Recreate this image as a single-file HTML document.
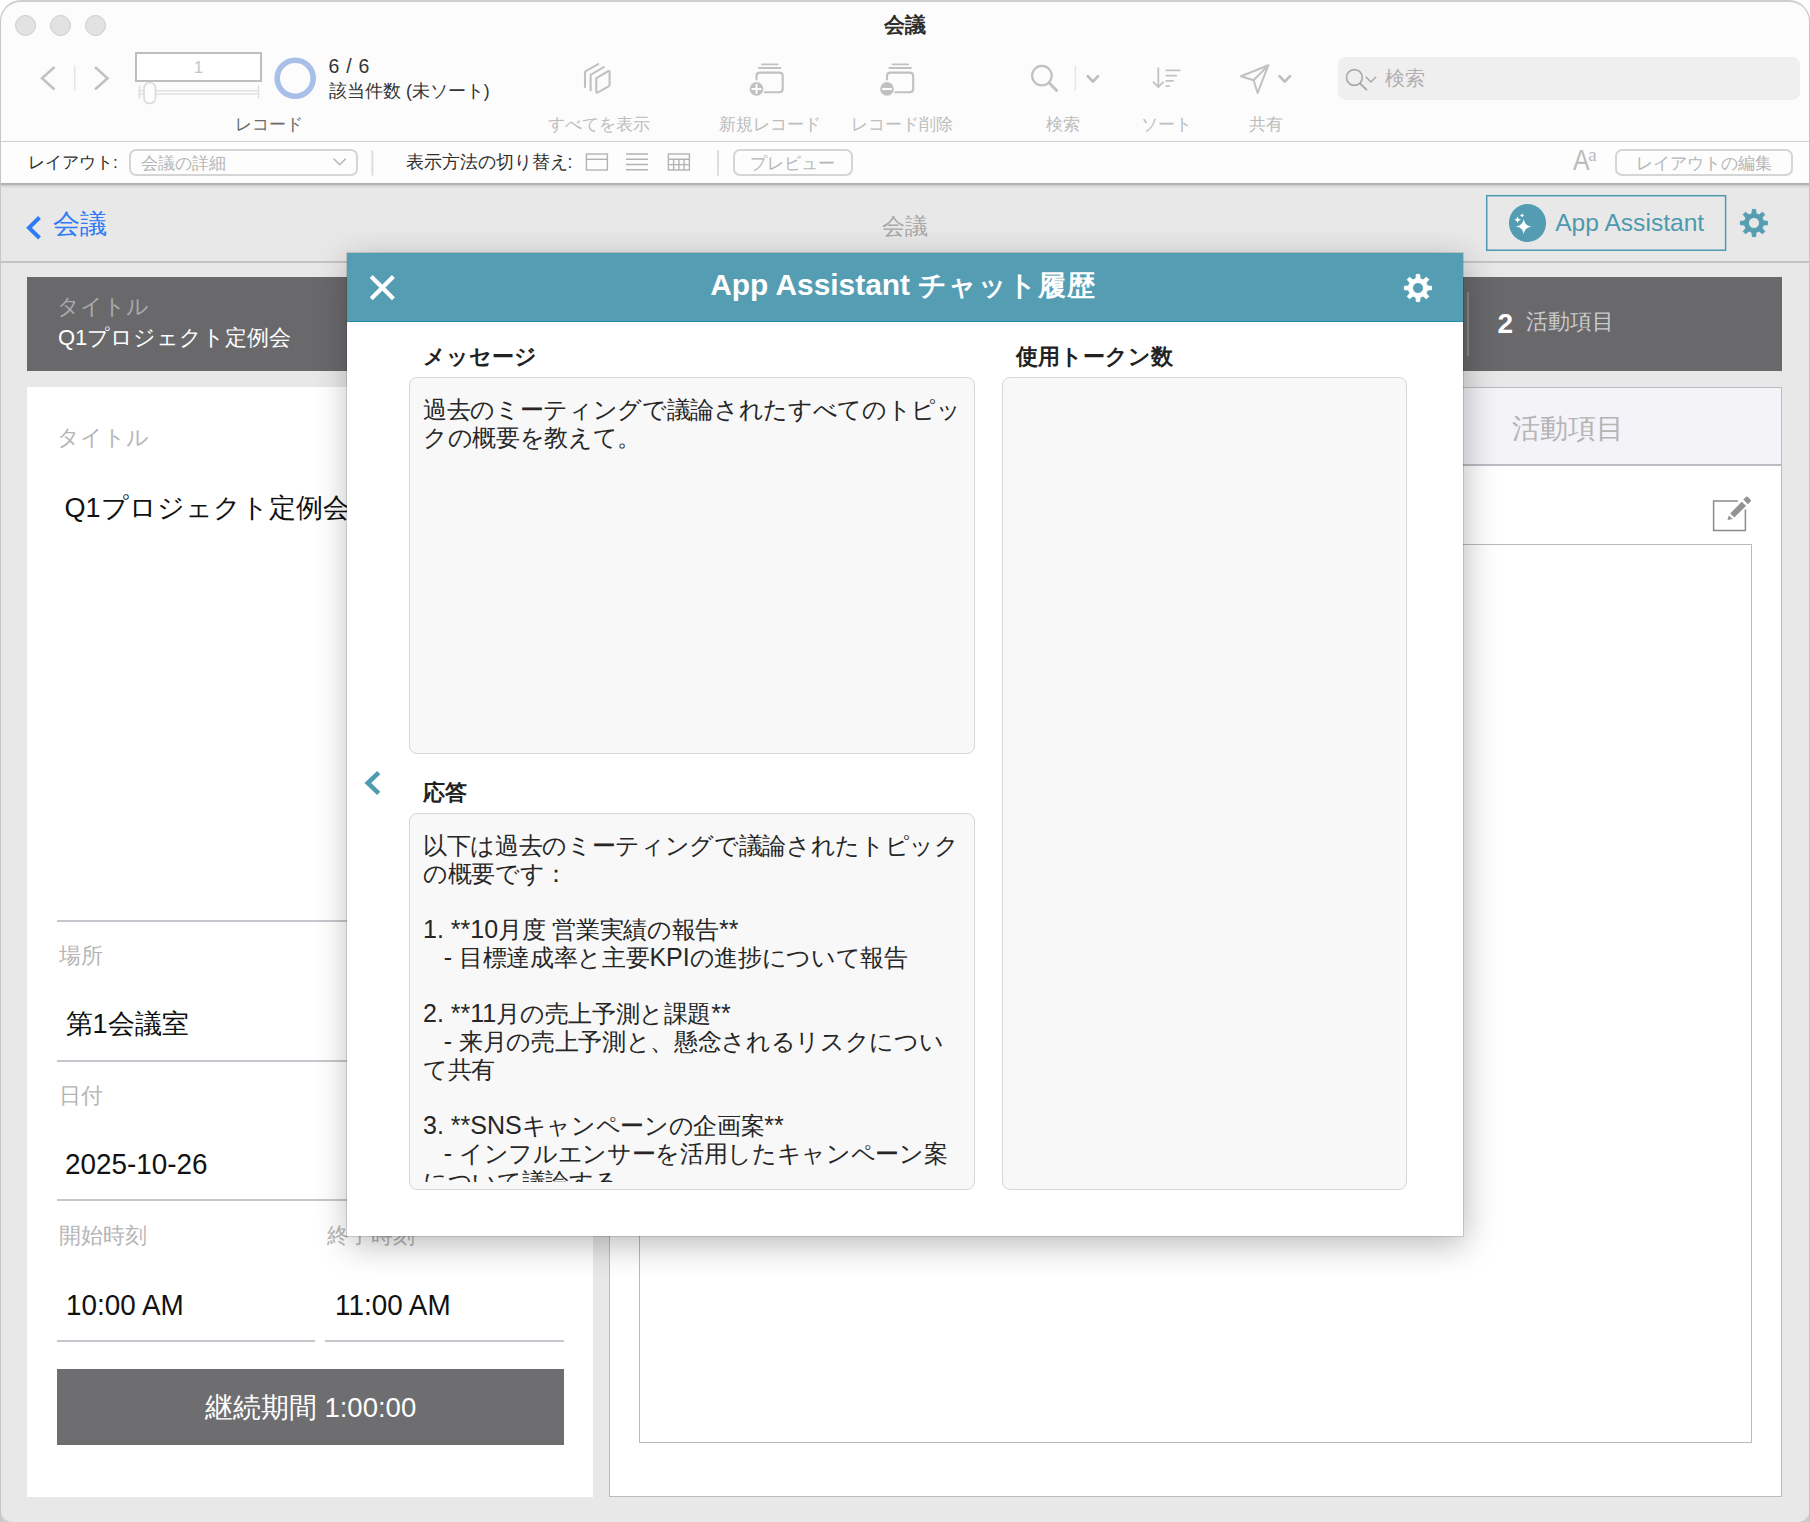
<!DOCTYPE html>
<html lang="ja">
<head>
<meta charset="utf-8">
<title>会議</title>
<style>
*{box-sizing:border-box;margin:0;padding:0}
html,body{width:1810px;height:1522px;overflow:hidden;background:#fff}
body{background:linear-gradient(to bottom,#fff 0,#fff 50%,#cdcdcd 50%,#cdcdcd 100%)}
body{font-family:"Liberation Sans",sans-serif;color:#222;position:relative}
.abs{position:absolute;white-space:nowrap;line-height:1}
svg{position:absolute;overflow:visible}
#win{position:absolute;left:0;top:0;width:1810px;height:1522px;background:#e8e8e8;border-radius:21px 21px 13px 13px;overflow:hidden}
#winborder{position:absolute;left:0;top:0;width:1810px;height:1542px;border:solid #c6c6c6;border-top-color:#cfcfcf;border-width:2px 1px 0 1px;border-radius:21px 21px 0 0;pointer-events:none;z-index:50}
#tb{position:absolute;left:0;top:0;width:1810px;height:142px;background:#fcfcfc;border-bottom:1.5px solid #d6d6d6}
#lb{position:absolute;left:0;top:142px;width:1810px;height:43px;background:#fdfdfd;border-bottom:2px solid #b2b2b2;box-shadow:0 1px 3px rgba(0,0,0,.18)}
.tl{position:absolute;top:15.4px;width:21px;height:21px;border-radius:50%;background:#e2e2e2;border:1.5px solid #cbcbcb}
.lbl{position:absolute;white-space:nowrap;line-height:1;font-size:17.2px;color:#bdbdbd;top:116.2px;transform:translateX(-50%)}
.pill{position:absolute;border:2px solid #d5d5d5;border-radius:7px;background:#fdfdfd;color:#b6b6b6;font-size:17.1px;white-space:nowrap;line-height:1}
.flabel{position:absolute;white-space:nowrap;line-height:1;font-size:22px;color:#b5b5b5}
.fval{position:absolute;white-space:nowrap;line-height:1;font-size:27px;color:#111}
.lat{font-size:28.8px;transform:scaleX(.967);transform-origin:left center}
.hline{position:absolute;height:2px;background:#c6c6cc}
.box{position:absolute;background:#f8f8f8;border:1.5px solid #d6d6d6;border-radius:8px;overflow:hidden}
.clip{position:absolute;left:0;right:0;top:8px;bottom:6.7px;overflow:hidden}
.btxt{position:absolute;left:13px;top:10px;font-size:24.2px;letter-spacing:-.34px;line-height:28px;color:#262626;white-space:pre}
.l{font-size:25px;letter-spacing:0;line-height:0}
.mlabel{position:absolute;white-space:nowrap;line-height:1;font-size:22.3px;font-weight:bold;color:#222}
</style>
</head>
<body>
<div id="win">

<!-- ===== toolbar ===== -->
<div id="tb">
  <div class="tl" style="left:14.5px"></div><div class="tl" style="left:49.5px"></div><div class="tl" style="left:84.5px"></div>
  <div class="abs" style="left:0;width:1810px;text-align:center;top:15px;font-size:20.5px;font-weight:bold;color:#2e2e2e">会議</div>

  <!-- nav arrows -->
  <svg width="1810" height="142" viewBox="0 0 1810 142" style="left:0;top:0" fill="none" stroke-linecap="round" stroke-linejoin="round">
    <path d="M54.5 67 L42 78.2 L54.5 89.5" stroke="#c2c2c2" stroke-width="2.6" stroke-linecap="butt" stroke-linejoin="miter"/>
    <path d="M95 67 L107.5 78.2 L95 89.5" stroke="#c2c2c2" stroke-width="2.6" stroke-linecap="butt" stroke-linejoin="miter"/>
    <path d="M74.7 66 V90.4" stroke="#e6e6e6" stroke-width="1.5"/>
    <!-- slider -->
    <path d="M139.5 86 V98 M258.5 86 V98" stroke="#dedede" stroke-width="1.5"/>
    <path d="M139 90.7 H258.5 M139 94 H258.5" stroke="#e2e2e2" stroke-width="1.6"/>
    <rect x="144" y="82.5" width="11.5" height="21" rx="5.7" fill="#fdfdfd" stroke="#dadada" stroke-width="1.6"/>
    <!-- blue ring -->
    <circle cx="295.2" cy="78.2" r="18" stroke="#a7bfe9" stroke-width="5.6"/>
    <!-- show all -->
    <g stroke="#c1c1c1" stroke-width="2.1">
      <path d="M596.3 78.2 L608.6 71 Q609.6 70.6 609.6 72 L609.6 84.6 Q609.6 85.8 608.6 86.4 L597.4 92.6 Q596.3 93 596.3 91.8 Z"/>
      <path d="M590.6 90.2 V75.6 Q590.6 74.8 591.4 74.3 L603.8 67.2"/>
      <path d="M585 87 V72.5 Q585 71.7 585.8 71.2 L598.2 64.1"/>
    </g>
    <!-- new record -->
    <g stroke="#c1c1c1">
      <path d="M762 64.4 H777.6" stroke-width="1.7"/>
      <path d="M759 68.1 H780.4" stroke-width="2"/>
      <path d="M756.5 79.5 V76 Q756.5 72.6 760 72.6 H779.2 Q782.7 72.6 782.7 76 V88.8 Q782.7 92.3 779.2 92.3 H764.8" stroke-width="2.1"/>
    </g>
    <circle cx="756.5" cy="88.9" r="6.8" fill="#c1c1c1"/>
    <path d="M752.3 88.9 H760.7 M756.5 84.7 V93.1" stroke="#fcfcfc" stroke-width="2"/>
    <!-- delete record -->
    <g stroke="#c1c1c1">
      <path d="M892.5 64.4 H908.1" stroke-width="1.7"/>
      <path d="M889.5 68.1 H910.9" stroke-width="2"/>
      <path d="M887 79.5 V76 Q887 72.6 890.5 72.6 H909.7 Q913.2 72.6 913.2 76 V88.8 Q913.2 92.3 909.7 92.3 H895.3" stroke-width="2.1"/>
    </g>
    <circle cx="887" cy="88.9" r="6.8" fill="#c1c1c1"/>
    <path d="M882.8 88.9 H891.2" stroke="#fcfcfc" stroke-width="2"/>
    <!-- search -->
    <circle cx="1041.9" cy="75.6" r="9.8" stroke="#c1c1c1" stroke-width="2.2"/>
    <path d="M1049.3 83.1 L1056.6 90.6" stroke="#c1c1c1" stroke-width="2.8"/>
    <path d="M1075.4 66.2 V90.3" stroke="#e6e6e6" stroke-width="1.5"/>
    <path d="M1087.8 76.2 L1092.9 81.6 L1098.1 76.2" stroke="#bdbdbd" stroke-width="2.6"/>
    <!-- sort -->
    <g stroke="#c1c1c1" stroke-width="1.8">
      <path d="M1158.3 68.1 V87 M1153.4 82.2 L1158.3 87.1 L1163.2 82.2"/>
      <path d="M1166.4 70.4 H1179.8 M1166.4 75.6 H1176.3 M1166.4 80.9 H1172.9 M1166.4 86.1 H1169.2"/>
    </g>
    <!-- share -->
    <path d="M1268.4 65.2 L1241 76.3 L1253.6 80.2 L1257.6 93 Z M1253.6 80.2 L1268.4 65.2" stroke="#c1c1c1" stroke-width="2"/>
    <path d="M1279.5 76.2 L1284.7 81.6 L1290.1 76.2" stroke="#bdbdbd" stroke-width="2.6"/>
  </svg>

  <div class="abs" style="left:135px;top:52px;width:127px;height:30px;border:2px solid #bebebe;background:#fff;text-align:center;font-size:16px;line-height:27px;color:#c4c4c4">1</div>
  <div class="abs" style="left:328.5px;top:57px;font-size:19.5px;color:#333;letter-spacing:.7px">6 / 6</div>
  <div class="abs" style="left:329px;top:83px;font-size:17.7px;color:#333">該当件数 (未ソート)</div>
  <div class="lbl" style="left:268.5px;color:#6a6a6a">レコード</div>
  <div class="lbl" style="left:598.5px">すべてを表示</div>
  <div class="lbl" style="left:770px">新規レコード</div>
  <div class="lbl" style="left:902.3px">レコード削除</div>
  <div class="lbl" style="left:1062.5px">検索</div>
  <div class="lbl" style="left:1166px">ソート</div>
  <div class="lbl" style="left:1265.8px">共有</div>

  <!-- search field -->
  <div class="abs" style="left:1338px;top:56.5px;width:462px;height:43.5px;background:#efefef;border-radius:8px"></div>
  <svg width="60" height="44" viewBox="1338 56 60 44" style="left:1338px;top:56px" fill="none" stroke="#a9a9a9" stroke-width="1.6" stroke-linecap="round" stroke-linejoin="round">
    <circle cx="1354.4" cy="77.5" r="7.9"/>
    <path d="M1360.2 83.6 L1366.4 89.6" stroke-width="2"/>
    <path d="M1366.3 77.3 L1370.9 82 L1375.7 77.3"/>
  </svg>
  <div class="abs" style="left:1385px;top:68px;font-size:20px;color:#b0b0b0">検索</div>
</div>

<!-- ===== layout bar ===== -->
<div id="lb">
  <div class="abs" style="left:28px;top:11.8px;font-size:17.4px;color:#2f2f2f">レイアウト:</div>
  <div class="pill" style="left:128.5px;top:6.5px;width:229px;height:27px;padding:4.1px 0 0 10.5px">会議の詳細</div>
  <div class="abs" style="left:405.5px;top:11.8px;font-size:17.5px;color:#2f2f2f">表示方法の切り替え:</div>
  <div class="pill" style="left:733px;top:6.5px;width:119.5px;height:27px;padding-top:4.1px;text-align:center">プレビュー</div>
  <div class="pill" style="left:1615px;top:6.5px;width:177.5px;height:27px;padding-top:4.1px;text-align:center">レイアウトの編集</div>
  <div class="abs" style="left:1573px;top:4px;font-size:29px;color:#bcbcbc;transform:scaleX(.86);transform-origin:left">A</div>
  <div class="abs" style="left:1588.3px;top:2.8px;font-size:19px;color:#bcbcbc;font-family:'Liberation Serif',serif">a</div>
  <svg width="1810" height="42" viewBox="0 142 1810 42" style="left:0;top:0" fill="none" stroke="#b3b3b3" stroke-width="1.4">
    <path d="M334 159 L339.7 164.8 L345.4 159" stroke="#b9b9b9" stroke-width="1.6" stroke-linecap="round" stroke-linejoin="round"/>
    <path d="M372.4 150.4 V175.4 M718 150 V175.7" stroke="#dedede" stroke-width="2"/>
    <rect x="586.4" y="154" width="21" height="16"/><path d="M586.4 159.3 H607.4"/>
    <path d="M626 154 H648 M626 159.3 H648 M626 164.5 H648 M626 169.7 H648"/>
    <rect x="668.4" y="154" width="21" height="16"/><path d="M668.4 159.3 H689.4 M668.4 164.6 H689.4 M673.6 159.3 V170 M678.9 159.3 V170 M684.1 159.3 V170"/>
  </svg>
</div>

<!-- ===== nav header ===== -->
<svg width="20" height="26" viewBox="24 214 20 26" style="left:24px;top:214px" fill="none" stroke="#2f7bf6" stroke-width="4"><path d="M39.5 217.5 L29 227.7 L39.5 238"/></svg>
<div class="abs" style="left:53px;top:211px;font-size:27px;color:#2f7bf6">会議</div>
<div class="abs" style="left:0;width:1810px;text-align:center;top:215px;font-size:23px;color:#a9a9a9">会議</div>
<svg width="244" height="60" viewBox="1484 193 244 60" style="left:1484px;top:193px" fill="none"><rect x="1486.7" y="195.7" width="238.9" height="54.5" stroke="#4c9ab0" stroke-width="1.5"/></svg>
<div class="abs" style="left:1508.5px;top:204px;width:37.6px;height:37.6px;border-radius:50%;background:#549cb1"></div>
<svg width="38" height="38" viewBox="-19 -19 38 38" style="left:1508.5px;top:204px" fill="#fff">
  <path d="M-4.30 -3.90 Q-3.29 2.62 3.50 3.60 Q-3.29 4.58 -4.30 11.10 Q-5.31 4.58 -12.10 3.60 Q-5.31 2.62 -4.30 -3.90 Z"/>
  <path d="M-10.40 -6.80 Q-9.91 -3.79 -6.90 -3.30 Q-9.91 -2.81 -10.40 0.20 Q-10.89 -2.81 -13.90 -3.30 Q-10.89 -3.79 -10.40 -6.80 Z"/>
  <path d="M-5.90 -9.80 Q-5.55 -7.95 -3.70 -7.60 Q-5.55 -7.25 -5.90 -5.40 Q-6.25 -7.25 -8.10 -7.60 Q-6.25 -7.95 -5.90 -9.80 Z"/>
</svg>
<div class="abs" style="left:1555.2px;top:211.2px;font-size:24.6px;color:#4f99af">App Assistant</div>
<svg id="gear1" width="30" height="30" viewBox="-15 -15 30 30" style="left:1739.4px;top:208px"><path fill="#569db2" stroke="#569db2" stroke-width="1" stroke-linejoin="round" fill-rule="evenodd" d="M-2.00 -9.29 L-1.70 -13.59 L1.70 -13.59 L2.00 -9.29 A9.50 9.50 0 0 1 5.15 -7.98 L8.41 -10.81 L10.81 -8.41 L7.98 -5.15 A9.50 9.50 0 0 1 9.29 -2.00 L13.59 -1.70 L13.59 1.70 L9.29 2.00 A9.50 9.50 0 0 1 7.98 5.15 L10.81 8.41 L8.41 10.81 L5.15 7.98 A9.50 9.50 0 0 1 2.00 9.29 L1.70 13.59 L-1.70 13.59 L-2.00 9.29 A9.50 9.50 0 0 1 -5.15 7.98 L-8.41 10.81 L-10.81 8.41 L-7.98 5.15 A9.50 9.50 0 0 1 -9.29 2.00 L-13.59 1.70 L-13.59 -1.70 L-9.29 -2.00 A9.50 9.50 0 0 1 -7.98 -5.15 L-10.81 -8.41 L-8.41 -10.81 L-5.15 -7.98 A9.50 9.50 0 0 1 -2.00 -9.29 Z M0 -5.50 A5.50 5.50 0 1 0 0 5.50 A5.50 5.50 0 1 0 0 -5.50 Z"/></svg>
<div class="abs" style="left:0;top:260.5px;width:1810px;height:2px;background:#c4c4c4"></div>

<!-- ===== dark bar ===== -->
<div class="abs" style="left:27px;top:277px;width:1755px;height:94px;background:#69696b"></div>
<div class="abs" style="left:57.4px;top:296px;font-size:22px;color:#a9a9ab">タイトル</div>
<div class="abs" style="left:58px;top:327px;font-size:22px;color:#fff">Q1プロジェクト定例会</div>
<div class="abs" style="left:1467px;top:292px;width:1.5px;height:64px;background:#8a8a8c"></div>
<div class="abs" style="left:1497.5px;top:309.5px;font-size:28px;font-weight:bold;color:#fff">2</div>
<div class="abs" style="left:1526px;top:311.3px;font-size:22.4px;color:#cbcbcb">活動項目</div>

<!-- ===== left panel ===== -->
<div class="abs" style="left:27px;top:387px;width:566.2px;height:1110px;background:#fff"></div>
<div class="flabel" style="left:57.4px;top:427.4px">タイトル</div>
<div class="fval" style="left:64.5px;top:495.4px">Q1プロジェクト定例会</div>
<div class="hline" style="left:57px;top:920px;width:507px"></div>
<div class="flabel" style="left:58.5px;top:945px">場所</div>
<div class="fval" style="left:65.5px;top:1011.3px">第1会議室</div>
<div class="hline" style="left:57px;top:1059.5px;width:507px"></div>
<div class="flabel" style="left:58.5px;top:1084.5px">日付</div>
<div class="fval lat" style="left:64.5px;top:1150.2px">2025-10-26</div>
<div class="hline" style="left:57px;top:1199px;width:507px"></div>
<div class="flabel" style="left:58.5px;top:1225px">開始時刻</div>
<div class="flabel" style="left:326.5px;top:1225px">終了時刻</div>
<div class="fval lat" style="left:65.5px;top:1291.2px">10:00 AM</div>
<div class="fval lat" style="left:334.5px;top:1291.2px">11:00 AM</div>
<div class="hline" style="left:57px;top:1340px;width:257.5px"></div>
<div class="hline" style="left:325px;top:1340px;width:239px"></div>
<div class="abs" style="left:57px;top:1369px;width:507px;height:75.5px;background:#6e6e70;color:#fff;font-size:27.5px;text-align:center;line-height:78px">継続期間 1:00:00</div>

<!-- ===== right panel ===== -->
<div class="abs" style="left:609.2px;top:387px;width:1172.8px;height:1110px;background:#fff;border:1.5px solid #bbbbc3"></div>
<div class="abs" style="left:610.7px;top:388px;width:1170.3px;height:77.5px;background:#f3f3f8;border-bottom:2px solid #bcbcc4"></div>
<div class="abs" style="left:1511.5px;top:414.5px;font-size:27.9px;color:#b5b5b5">活動項目</div>
<div class="abs" style="left:638.8px;top:543.7px;width:1113.7px;height:899.5px;border:1.5px solid #b9b9c1;background:#fff"></div>
<svg width="44" height="40" viewBox="1710 494 44 40" style="left:1710px;top:494px" fill="none">
  <path d="M1737.8 501.1 H1713.6 V530.6 H1745.4 V509.6" stroke="#8b8b8b" stroke-width="1.5"/>
  <path fill="#939393" d="M1727.5 520 L1728.7 515.4 L1732.8 519 Z"/>
  <path fill="#939393" d="M1730.2 513.5 L1741.7 501.8 L1746.1 505.8 L1734.3 517.6 Z"/>
  <path fill="#939393" d="M1743.3 499.4 L1745.9 497 Q1746.9 496.2 1747.9 497.1 L1750.6 499.7 Q1751.4 500.7 1750.6 501.6 L1747.8 504.3 Z"/>
</svg>

<!-- ===== modal ===== -->
<div class="abs" style="left:347px;top:253px;width:1116.3px;height:983px;background:#fff;box-shadow:2px 8px 32px rgba(0,0,0,.28),0 0 0 1px rgba(0,0,0,.13)"></div>
<div class="abs" style="left:347px;top:253px;width:1116.3px;height:69px;background:#559db2;border-bottom:1.6px solid #238ca7"></div>
<svg width="30" height="30" viewBox="367 272 30 30" style="left:367px;top:272px" fill="none" stroke="#fff" stroke-width="4.2"><path d="M371.2 276.5 L393.4 298.7 M393.4 276.5 L371.2 298.7"/></svg>
<div class="abs" style="left:710.2px;top:270.2px;font-size:29.9px;font-weight:bold;color:#fff">App Assistant <span style="font-size:28.2px;letter-spacing:1.1px;margin-left:-.5px">チャット履歴</span></div>
<svg id="gear2" width="30" height="30" viewBox="-15 -15 30 30" style="left:1402.9px;top:272.8px"><path fill="#fff" stroke="#fff" stroke-width="1" stroke-linejoin="round" fill-rule="evenodd" d="M-2.00 -9.29 L-1.70 -13.59 L1.70 -13.59 L2.00 -9.29 A9.50 9.50 0 0 1 5.15 -7.98 L8.41 -10.81 L10.81 -8.41 L7.98 -5.15 A9.50 9.50 0 0 1 9.29 -2.00 L13.59 -1.70 L13.59 1.70 L9.29 2.00 A9.50 9.50 0 0 1 7.98 5.15 L10.81 8.41 L8.41 10.81 L5.15 7.98 A9.50 9.50 0 0 1 2.00 9.29 L1.70 13.59 L-1.70 13.59 L-2.00 9.29 A9.50 9.50 0 0 1 -5.15 7.98 L-8.41 10.81 L-10.81 8.41 L-7.98 5.15 A9.50 9.50 0 0 1 -9.29 2.00 L-13.59 1.70 L-13.59 -1.70 L-9.29 -2.00 A9.50 9.50 0 0 1 -7.98 -5.15 L-10.81 -8.41 L-8.41 -10.81 L-5.15 -7.98 A9.50 9.50 0 0 1 -2.00 -9.29 Z M0 -5.50 A5.50 5.50 0 1 0 0 5.50 A5.50 5.50 0 1 0 0 -5.50 Z"/></svg>

<div class="mlabel" style="left:423px;top:345.5px">メッセージ</div>
<div class="mlabel" style="left:1015.8px;top:345.5px">使用トークン数</div>
<div class="box" style="left:409px;top:377px;width:566px;height:377px"><div class="clip"><div class="btxt">過去のミーティングで議論されたすべてのトピッ
クの概要を教えて。</div></div></div>
<div class="box" style="left:1001.5px;top:376.5px;width:405.5px;height:813.5px"></div>
<svg width="20" height="28" viewBox="362 768 20 28" style="left:362px;top:768px" fill="none" stroke="#4f9bb1" stroke-width="4.6"><path d="M378.7 772.6 L367.8 783 L378.7 793.4"/></svg>
<div class="mlabel" style="left:423px;top:782px">応答</div>
<div class="box" style="left:409px;top:812.5px;width:566px;height:377px"><div class="clip"><div class="btxt">以下は過去のミーティングで議論されたトピック
の概要です：

<span class="l">1. **10</span>月度<span class="l"> </span>営業実績の報告<span class="l">**</span>
<span class="l">   - </span>目標達成率と主要<span class="l">KPI</span>の進捗について報告

<span class="l">2. **11</span>月の売上予測と課題<span class="l">**</span>
<span class="l">   - </span>来月の売上予測と、懸念されるリスクについ
て共有

<span class="l">3. **SNS</span>キャンペーンの企画案<span class="l">**</span>
<span class="l">   - </span>インフルエンサーを活用したキャンペーン案
について議論する</div></div></div>

</div>
<div id="winborder"></div>
</body>
</html>
